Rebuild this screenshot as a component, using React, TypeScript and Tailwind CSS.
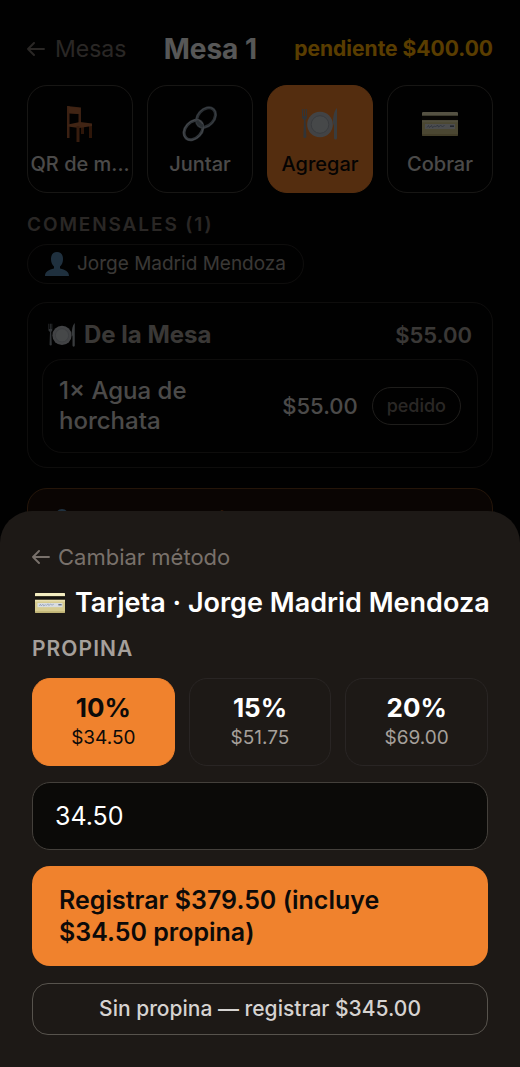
import { useState } from "react";

interface IconProps {
  className?: string;
}

function ChairIcon({ className }: IconProps) {
  return (
    <svg viewBox="0 0 36 36" className={className} aria-hidden="true">
      <path fill="#84401c" d="M19 18h3v10h-3zM27 19h3v13h-3z" />
      <path fill="#a85c34" d="M5 0h2.500v32H5z" />
      <path fill="#a85c34" d="M5 0 19 1.500V18h-2.500V8L7 7.500H5z" />
      <path fill="#b8683a" d="M6 .8 18 2v6L7 7z" />
      <path fill="#b8683a" d="M6 18.500 18 16l12 1.500V20l-13 2-11-1.500z" />
      <path fill="#9a5128" d="M14.500 20h3v16h-3z" />
    </svg>
  );
}

function LinkIcon({ className }: IconProps) {
  return (
    <svg viewBox="0 0 36 36" className={className} aria-hidden="true" fill="none">
      <ellipse cx="24" cy="11.500" rx="8" ry="11" transform="rotate(42 24 11.500)" stroke="#77838f" strokeWidth="3" />
      <ellipse cx="24" cy="11.500" rx="8.400" ry="11.400" transform="rotate(42 24 11.500)" stroke="#a5b3c0" strokeWidth=".9" />
      <ellipse cx="11.500" cy="24" rx="8" ry="11" transform="rotate(42 11.500 24)" stroke="#8a97a4" strokeWidth="3" />
      <ellipse cx="11.500" cy="24" rx="8.400" ry="11.400" transform="rotate(42 11.500 24)" stroke="#c8d2dc" strokeWidth=".9" />
      <path d="M15 14.500c1 3 3 5 6.500 5.500" stroke="#77838f" strokeWidth="2.800" />
    </svg>
  );
}

function PlateIcon({ className }: IconProps) {
  return (
    <svg viewBox="0 0 36 32" className={className} aria-hidden="true">
      <path
        fill="#8d959d"
        d="M0 1h1v7h1V1h1v7h1V1h1v9l-1.400 2 .8 17a1.600 1.600 0 0 1-3 0l.6-17L0 10z"
      />
      <path fill="#a4abb2" d="M35 0v30a1.500 1.500 0 0 1-3 0V18l-1-3c0-6 1-12 4-15z" />
      <circle cx="18" cy="16.500" r="12.800" fill="#bcc1c7" />
      <circle cx="18" cy="16.500" r="8.800" fill="#c9cdd2" stroke="#a2a8af" strokeWidth="1" />
    </svg>
  );
}

function CardIcon({ className }: IconProps) {
  return (
    <svg viewBox="0 0 36 24" className={className} aria-hidden="true">
      <rect width="36" height="24" rx="1.500" fill="#d6cb90" />
      <path fill="#f3ecc0" d="M1 0h34l1 1v2.500H0V1z" />
      <path fill="#15130e" d="M0 3.800h36v4.400H0z" />
      <path fill="#e8dfb0" d="M0 8.200h36v2H0z" />
      <path fill="#d9dde0" d="M3 12h30v5H3z" />
      <path
        d="m5 15.500 1.500-2 1 2 2-2 1 2 2-1.500 1 1 2-2 1 2 2-1.500 2 1 2-1"
        fill="none"
        stroke="#7484a8"
        strokeWidth=".7"
      />
      <path fill="#44526e" d="M28 13.500h4v1.300h-4z" />
      <path fill="#bfb375" d="M0 22h36v.5a1.500 1.500 0 0 1-1.500 1.500h-33A1.500 1.500 0 0 1 0 22.500z" />
    </svg>
  );
}

function PersonIcon({ className }: IconProps) {
  return (
    <svg viewBox="0 0 24 24" className={className} aria-hidden="true">
      <path
        fill="#5a8ab3"
        d="M12 0c4 0 6 3 6 7 0 3-1 5.500-3 7.500v2c5 1 9 3 9 7.500H0c0-4.500 4-6.500 9-7.500v-2C7 12.500 6 10 6 7c0-4 2-7 6-7z"
      />
    </svg>
  );
}

function ArrowIcon({ className }: IconProps) {
  return (
    <svg
      viewBox="0 0 18 14"
      className={className}
      aria-hidden="true"
      fill="none"
      stroke="currentColor"
      strokeWidth="1.900"
      strokeLinecap="round"
      strokeLinejoin="round"
    >
      <path d="M17 7H1M7 1 1 7l6 6" />
    </svg>
  );
}

const actions = [
  { label: "QR de m...", icon: <ChairIcon className="h-9 w-9" />, active: false },
  { label: "Juntar", icon: <LinkIcon className="h-9 w-9" />, active: false },
  { label: "Agregar", icon: <PlateIcon className="h-8 w-9" />, active: true },
  { label: "Cobrar", icon: <CardIcon className="h-6 w-9" />, active: false },
];

const tips = [
  { percent: "10%", amount: "34.50" },
  { percent: "15%", amount: "51.75" },
  { percent: "20%", amount: "69.00" },
];

const subtotal = 345;

function TablePage() {
  return (
    <main className="px-[27px] pt-[31px]">
      <header className="flex items-center justify-between">
        <a href="#mesas" className="flex items-center gap-[10px] text-[23px] leading-9 text-stone-500">
          <ArrowIcon className="h-[14px] w-[18px]" />
          Mesas
        </a>
        <h1 className="text-[28px] leading-9 font-bold text-stone-50">Mesa 1</h1>
        <span className="text-[21px] leading-9 font-bold text-[#ffae00]">
          pendiente $400.00
        </span>
      </header>

      <div className="mt-[18px] grid grid-cols-4 gap-[14px]">
        {actions.map((action) => (
          <button
            key={action.label}
            type="button"
            className={
              action.active
                ? "flex h-[108px] flex-col items-center rounded-[20px] border border-[#f0822d] bg-[#f0822d] pt-4 text-stone-950"
                : "flex h-[108px] flex-col items-center rounded-[20px] border border-stone-700 pt-4 text-stone-300"
            }
          >
            <span className="flex h-11 items-center">{action.icon}</span>
            <span className="mt-1 text-xl leading-7 font-medium whitespace-nowrap">
              {action.label}
            </span>
          </button>
        ))}
      </div>

      {/* Comensales */}
      <h2 className="mt-[18px] text-[19px] leading-7 font-semibold tracking-widest text-stone-500">
        COMENSALES (1)
      </h2>
      <div className="mt-[5px] inline-flex h-10 items-center gap-2 rounded-full border border-stone-800 px-[17px] text-[19px] text-stone-400">
        <PersonIcon className="h-6 w-6" />
        Jorge Madrid Mendoza
      </div>

      {/* Cuenta de la mesa */}
      <section className="mt-[18px] rounded-[20px] border border-stone-800 px-[14px] pt-4 pb-[14px]">
        <div className="flex items-center justify-between px-[6px] text-2xl leading-8 text-stone-400">
          <h3 className="flex items-center gap-2 font-bold">
            <PlateIcon className="h-6 w-7" />
            De la Mesa
          </h3>
          <span className="text-[22px] font-semibold">$55.00</span>
        </div>
        <div className="mt-2 flex items-center justify-between rounded-[20px] border border-stone-800 p-4 text-[22px] leading-[30px] font-medium text-stone-300">
          <span className="w-40 text-2xl leading-[30px]">1× Agua de horchata</span>
          <div className="flex items-center gap-[14px]">
            <span>$55.00</span>
            <span className="rounded-full border border-stone-600 px-[14px] py-1 text-lg leading-7 text-stone-500">
              pedido
            </span>
          </div>
        </div>
      </section>

      {/* Cuenta del comensal */}
      <section className="mt-5 rounded-[20px] border border-[#6b3d1c] bg-[#1d110a] px-5 pt-4 pb-4">
        <div className="flex items-center justify-between text-2xl leading-8">
          <h3 className="flex items-center gap-2 font-bold text-[#f0822d]">
            <PersonIcon className="h-6 w-7" />
            Jorge Madrid Mendoza
          </h3>
          <span className="text-[22px] font-semibold text-stone-400">$345.00</span>
        </div>
      </section>
    </main>
  );
}

function PaymentSheet() {
  const [tip, setTip] = useState("34.50");
  const total = (subtotal + Number(tip)).toFixed(2);

  return (
    <div
      role="dialog"
      aria-labelledby="sheet-title"
      className="relative w-full rounded-t-[32px] bg-[#1d1916] px-8 pt-7 pb-8"
    >
      <button type="button" className="flex items-center gap-2 text-[22px] leading-9 text-stone-500">
        <ArrowIcon className="h-[14px] w-[18px]" />
        Cambiar método
      </button>
      <h2
        id="sheet-title"
        className="mt-2 flex items-center gap-[10px] pl-[3px] text-[27px] leading-10 font-semibold whitespace-nowrap text-white"
      >
        <CardIcon className="h-5 w-[30px] shrink-0" />
        Tarjeta · Jorge Madrid Mendoza
      </h2>
      <h3
        id="tip-heading"
        className="mt-3 text-[21px] leading-7 font-semibold tracking-wider text-stone-400"
      >
        PROPINA
      </h3>

      <div className="mt-[15px] grid grid-cols-3 gap-[14px]">
        {tips.map((option) => (
          <button
            key={option.percent}
            type="button"
            onClick={() => setTip(option.amount)}
            className={
              option.amount === tip
                ? "flex h-22 flex-col items-center justify-center rounded-[18px] border border-[#f0822d] bg-[#f0822d] text-stone-950"
                : "flex h-22 flex-col items-center justify-center rounded-[18px] border border-stone-800 text-stone-400"
            }
          >
            <span
              className={
                option.amount === tip
                  ? "text-[26px] leading-8 font-bold"
                  : "text-[26px] leading-8 font-bold text-white"
              }
            >
              {option.percent}
            </span>
            <span className="text-[19px] leading-7">{`$${option.amount}`}</span>
          </button>
        ))}
      </div>

      <input
        type="text"
        inputMode="decimal"
        aria-labelledby="tip-heading"
        value={tip}
        onChange={(e) => setTip(e.target.value)}
        className="mt-4 block h-[68px] w-full rounded-[18px] border border-stone-700 bg-[#0b0a08] px-[22px] text-[25px] text-white"
      />
      <button
        type="button"
        className="mt-4 block w-full rounded-[18px] bg-[#f0822d] px-[27px] py-[18px] text-left text-[25px] leading-8 font-semibold text-stone-950"
      >
        {`Registrar $${total} (incluye $${tip} propina)`}
      </button>
      <button
        type="button"
        className="mt-[17px] block h-[52px] w-full rounded-2xl border border-stone-600 text-[21px] font-medium text-stone-300"
      >
        Sin propina — registrar $345.00
      </button>
    </div>
  );
}

export default function App() {
  return (
    <div className="h-screen overflow-hidden bg-[#050505] font-[Inter,'Liberation_Sans',sans-serif]">
      <TablePage />
      <div className="fixed inset-0 flex items-end bg-black/65">
        <PaymentSheet />
      </div>
    </div>
  );
}
